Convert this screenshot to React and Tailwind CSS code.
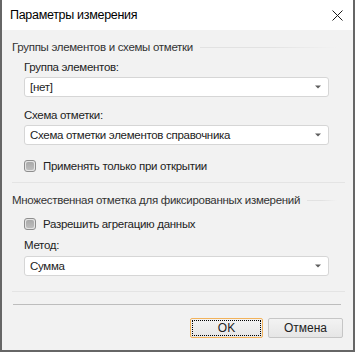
function Combo({ value }) {
  return (
    <div className="h-[20px] w-[305px] flex items-center justify-between rounded-[3px] border border-[#d6d6d6] bg-white pl-[5px] pr-[7px]">
      <span className="text-[11.5px] leading-[16px] tracking-[-0.3px] text-[#222]">{value}</span>
      <svg width="6" height="4" viewBox="0 0 6 4" className="block">
        <path d="M0 0.5H6L3 3.5Z" fill="#5e5e5e" />
      </svg>
    </div>
  );
}

function Check({ label }) {
  return (
    <div className="flex h-[16px] items-center gap-[7px]">
      <div className="h-[12px] w-[12px] rounded-[3px] border border-[#8e8e8e] bg-[#e4e4e4] p-[1px]">
        <div className="h-full w-full rounded-[2px] bg-gradient-to-b from-[#a9a9a9] to-[#bdbdbd]" />
      </div>
      <span className="text-[11.5px] leading-[16px] tracking-[-0.3px] text-[#222]">{label}</span>
    </div>
  );
}

function Header({ title }) {
  return (
    <div className="flex h-[16px] items-center gap-[7px] pr-[8px]">
      <span className="whitespace-nowrap text-[11.5px] leading-[16px] tracking-[-0.3px] text-[#333]">{title}</span>
      <div className="h-px flex-1 bg-gradient-to-r from-[#e2e2e2] via-[#e2e2e2] to-transparent" />
    </div>
  );
}

function Label({ children, className }) {
  return (
    <div className={`h-[16px] text-[11.5px] leading-[16px] tracking-[-0.3px] text-[#222] ${className}`}>
      {children}
    </div>
  );
}

export default function App() {
  return (
    <div
      className="flex h-[352px] w-[355px] flex-col border-x-2 border-b-2 border-[#666] bg-[#f2f2f2]"
      style={{ fontFamily: '"Liberation Sans", Arial, sans-serif' }}
    >
      <div className="flex h-[30px] shrink-0 items-center justify-between bg-white pl-[8px] pr-[10px]">
        <span className="text-[12.5px] tracking-[-0.3px] text-black">Параметры измерения</span>
        <svg width="11" height="11" viewBox="0 0 11 11" className="block">
          <path d="M0.5 0.5L10.5 10.5M10.5 0.5L0.5 10.5" stroke="#1a1a1a" strokeWidth="1" />
        </svg>
      </div>

      <div className="flex flex-1 flex-col pl-[10px] pr-[8px]">
        <div className="mt-[9px]">
          <Header title="Группы элементов и схемы отметки" />
        </div>
        <div className="pl-[12px]">
          <Label className="mt-[4px]">Группа элементов:</Label>
          <div className="mt-[2px]"><Combo value="[нет]" /></div>
          <Label className="mt-[10px]">Схема отметки:</Label>
          <div className="mt-[2px]"><Combo value="Схема отметки элементов справочника" /></div>
          <div className="mt-[13px]"><Check label="Применять только при открытии" /></div>
        </div>

        <div className="mt-[8px] h-px bg-[#e4e4e4]" />

        <div className="mt-[9px]">
          <Header title="Множественная отметка для фиксированных измерений" />
        </div>
        <div className="pl-[12px]">
          <div className="mt-[8px]"><Check label="Разрешить агрегацию данных" /></div>
          <Label className="mt-[5px]">Метод:</Label>
          <div className="mt-[3px]"><Combo value="Сумма" /></div>
        </div>

        <div className="mt-[15px] h-px bg-[#e4e4e4]" />
        <div className="mt-[12px] mr-[4px] ml-[1px] h-px bg-[#bdbdbd]" />

        <div className="mt-[13px] flex justify-end gap-[5px] pr-[2px]">
          <button className="h-[20px] w-[73px] rounded-[2px] border border-[#f2b35c] bg-gradient-to-b from-[#f3f3f3] to-[#e6e6e6] p-[1px]">
            <div className="flex h-full w-full items-center justify-center border border-dotted border-black text-[12px] leading-none text-[#222]">
              OK
            </div>
          </button>
          <button className="flex h-[20px] w-[75px] items-center justify-center rounded-[2px] border border-[#c6c6c6] bg-gradient-to-b from-[#f3f3f3] to-[#e6e6e6] text-[12px] text-[#222]">
            Отмена
          </button>
        </div>
      </div>
    </div>
  );
}
